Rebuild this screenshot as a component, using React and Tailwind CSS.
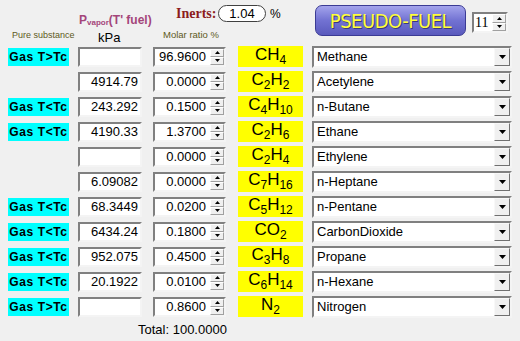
import React from "react";

const rows = [
  { label: "Gas T>Tc", p: "", m: "96.9600", f: "CH4", n: "Methane" },
  { label: "", p: "4914.79", m: "0.0000", f: "C2H2", n: "Acetylene" },
  { label: "Gas T<Tc", p: "243.292", m: "0.1500", f: "C4H10", n: "n-Butane" },
  { label: "Gas T<Tc", p: "4190.33", m: "1.3700", f: "C2H6", n: "Ethane" },
  { label: "", p: "", m: "0.0000", f: "C2H4", n: "Ethylene" },
  { label: "", p: "6.09082", m: "0.0000", f: "C7H16", n: "n-Heptane" },
  { label: "Gas T<Tc", p: "68.3449", m: "0.0200", f: "C5H12", n: "n-Pentane" },
  { label: "Gas T<Tc", p: "6434.24", m: "0.1800", f: "CO2", n: "CarbonDioxide" },
  { label: "Gas T<Tc", p: "952.075", m: "0.4500", f: "C3H8", n: "Propane" },
  { label: "Gas T<Tc", p: "20.1922", m: "0.0100", f: "C6H14", n: "n-Hexane" },
  { label: "Gas T>Tc", p: "", m: "0.8600", f: "N2", n: "Nitrogen" },
];

function Formula({ f }) {
  const parts = f.match(/[A-Z]+|\d+/g);
  return (
    <span>
      {parts.map((p, i) =>
        /\d/.test(p) ? (
          <span key={i} className="text-[12px] align-[-4px]">{p}</span>
        ) : (
          <span key={i}>{p}</span>
        )
      )}
    </span>
  );
}

function Tri({ up }) {
  return (
    <svg width="5" height="3" viewBox="0 0 5 3" className="block">
      {up ? <path d="M0 3 L2.5 0 L5 3 Z" fill="#000" /> : <path d="M0 0 L5 0 L2.5 3 Z" fill="#000" />}
    </svg>
  );
}

function Spin() {
  return (
    <div className="flex flex-col w-[14px] h-full flex-none">
      <div className="flex-1 flex items-center justify-center bg-[#f0f0f0] border border-t-white border-l-white border-b-[#a0a0a0] border-r-[#a0a0a0]">
        <Tri up />
      </div>
      <div className="flex-1 flex items-center justify-center bg-[#f0f0f0] border border-t-white border-l-white border-b-[#a0a0a0] border-r-[#a0a0a0]">
        <Tri />
      </div>
    </div>
  );
}

const sunken =
  "border-2 border-t-[#808080] border-l-[#808080] border-r-[#f4f4f4] border-b-[#f4f4f4] bg-white";

export default function App() {
  return (
    <div
      className="w-[520px] h-[341px] bg-[#f0f0f0] overflow-hidden text-black"
      style={{ fontFamily: '"Liberation Sans", Arial, sans-serif' }}
    >
      {/* Header */}
      <div className="flex h-[44px]">
        <div className="w-[315px] flex-none flex flex-col">
          <div className="h-[29px] flex items-start">
            <div className="ml-[79px] w-[97px] mt-[13px] text-[12px] font-bold leading-[14px] text-[#a4457a] whitespace-nowrap">
              P<span className="text-[8px] font-bold align-[-1px]">vapor</span>(T' fuel)
            </div>
            <div className="mt-[5px] flex items-center">
              <span
                className="w-[42px] text-[14px] font-bold text-[#8c1c1c] leading-[17px]"
                style={{ fontFamily: '"Liberation Serif", serif' }}
              >
                Inerts:
              </span>
              <div className="w-[48px] h-[17px] rounded-[9px] border border-[#404040] bg-white flex items-center justify-center text-[13px] leading-none">
                1.04
              </div>
              <span className="ml-[4px] text-[12px] leading-none">%</span>
            </div>
          </div>
          <div className="h-[15px] flex items-start">
            <span className="ml-[12px] w-[86px] mt-[2px] text-[9px] leading-[9px] text-[#5e5a22] whitespace-nowrap">
              Pure substance
            </span>
            <span className="w-[65px] mt-[3px] text-[13px] leading-[12px]">kPa</span>
            <span className="mt-[1px] text-[9.5px] leading-[10px] text-[#5e5a22] whitespace-nowrap">
              Molar ratio %
            </span>
          </div>
        </div>
        <div
          className="mt-[5px] w-[151px] h-[31px] rounded-[7px] border border-[#3b3b94] flex items-center justify-center bg-gradient-to-b from-[#a4a4ec] via-[#7272d2] to-[#5a5abd]"
        >
          <span
            className="text-[20px] text-[#ffff3a] leading-none tracking-[-0.5px]"
            style={{ fontFamily: '"DejaVu Sans Condensed", "Liberation Sans Narrow", "Liberation Sans", sans-serif', textShadow: "1px 1px 0 #3a3a7a" }}
          >
            PSEUDO-FUEL
          </span>
        </div>
        <div className={`ml-[6px] mt-[12px] w-[36px] h-[21px] flex ${sunken}`}>
          <span
            className="flex-1 text-[14px] leading-[17px] pl-[1px]"
            style={{ fontFamily: '"Liberation Serif", serif' }}
          >
            11
          </span>
          <Spin />
        </div>
      </div>

      {/* Rows */}
      {rows.map((r, i) => (
        <div key={i} className="flex items-center h-[25px] pl-[8px]">
          <div
            className={`w-[61px] h-[18px] flex items-center justify-center text-[12px] font-bold tracking-[0.6px] ${
              r.label ? "bg-[#00ffff]" : ""
            }`}
          >
            {r.label}
          </div>
          <div className={`ml-[9px] w-[64px] h-[20px] flex items-center justify-end pr-[2px] text-[13px] ${sunken}`}>
            {r.p}
          </div>
          <div className={`ml-[11px] w-[73px] h-[20px] flex items-stretch text-[13px] ${sunken}`}>
            <span className="flex-1 flex items-center justify-end pr-[4px]">{r.m}</span>
            <Spin />
          </div>
          <div className="ml-[12px] w-[65px] h-[21px] bg-[#ffff00] flex items-center justify-center text-[17px] leading-none pb-[2px]">
            <Formula f={r.f} />
          </div>
          <div className={`ml-[9px] w-[200px] h-[22px] flex items-stretch text-[13px] ${sunken}`}>
            <span className="flex-1 flex items-center pl-[3px]">{r.n}</span>
            <div className="w-[16px] flex-none flex items-center justify-center bg-[#f0f0f0] border border-t-[#f8f8f8] border-l-[#f8f8f8] border-b-[#707070] border-r-[#707070]">
              <svg width="7" height="4" viewBox="0 0 7 4">
                <path d="M0 0 L7 0 L3.5 4 Z" fill="#000" />
              </svg>
            </div>
          </div>
        </div>
      ))}

      <div className="h-[22px] flex items-center pl-[138px] text-[13px]">Total: 100.0000</div>
    </div>
  );
}
